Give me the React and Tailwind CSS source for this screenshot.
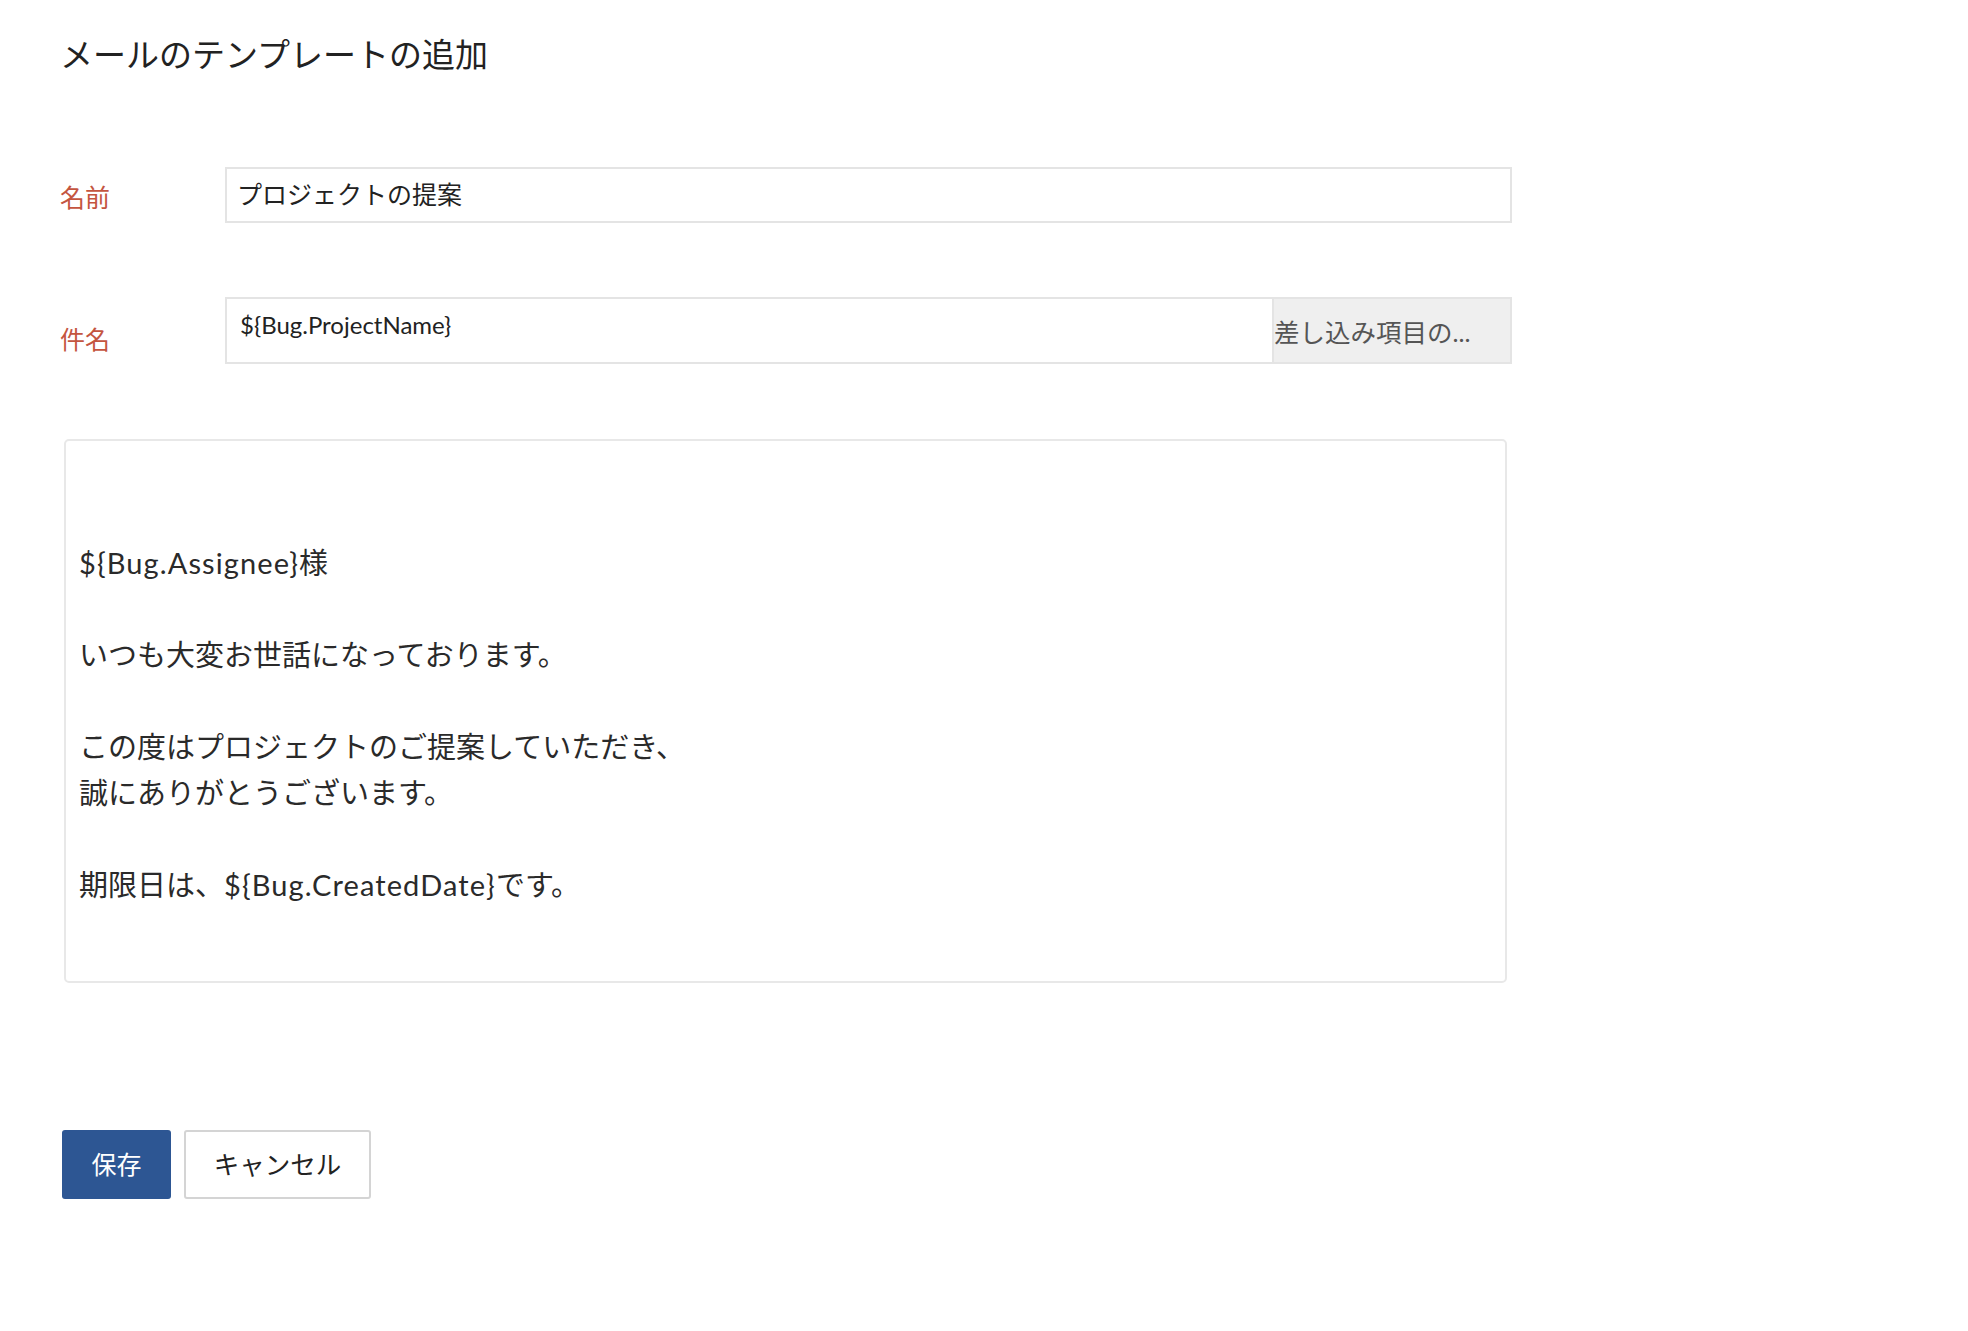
import React from "react";

const FONT = { fontFamily: "Lato, 'Noto Sans CJK JP', sans-serif" };

function L({ children }) {
  return <span className="tracking-[1.1px]">{children}</span>;
}

export default function App() {
  return (
    <div
      className="w-[1968px] h-[1331px] bg-white text-[#222] pl-[60px] pt-[30px]"
      style={FONT}
    >
      <h1 className="text-[33px] leading-[48px] font-normal text-[#222]">
        メールのテンプレートの追加
      </h1>

      <div className="mt-[89px] flex items-center">
        <div className="w-[165px] pt-[6px] text-[25px] text-[#c4553f]">名前</div>
        <div className="w-[1287px] h-[56px] border-2 border-[#e4e4e4] flex items-center pl-[10px] text-[25px] text-[#222]">
          プロジェクトの提案
        </div>
      </div>

      <div className="mt-[74px] flex items-center">
        <div className="w-[165px] pt-[18px] text-[25px] text-[#c4553f]">件名</div>
        <div className="w-[1287px] h-[67px] border-2 border-[#e4e4e4] flex">
          <div className="flex-1 pl-[13px] pt-[9px] text-[24px] leading-[34px] text-[#222]">
            {"${Bug.ProjectName}"}
          </div>
          <div className="w-[238px] bg-[#efefef] border-l-2 border-[#e4e4e4] flex items-center text-[25.5px] text-[#555] pt-[4px]">
            差し込み項目の...
          </div>
        </div>
      </div>

      <div className="mt-[75px] ml-[4px] w-[1443px] h-[544px] border-2 border-[#e8e8e8] rounded-[5px] pl-[13px] pt-[99px] text-[29px] leading-[46px] text-[#2a2a2a]">
        <div>
          <L>{"${Bug.Assignee}"}</L>様
        </div>
        <div className="h-[46px]" />
        <div>いつも大変お世話になっております。</div>
        <div className="h-[46px]" />
        <div>この度はプロジェクトのご提案していただき、</div>
        <div>誠にありがとうございます。</div>
        <div className="h-[46px]" />
        <div>
          期限日は、<L>{"${Bug.CreatedDate}"}</L>です。
        </div>
      </div>

      <div className="mt-[147px] ml-[2px] flex gap-[13px]">
        <button className="w-[109px] h-[69px] rounded-[3px] bg-[#2d5693] text-white text-[25px] flex items-center justify-center">
          保存
        </button>
        <button className="w-[187px] h-[69px] rounded-[3px] border-2 border-[#d4d4d4] bg-white text-[#222] text-[25.5px] flex items-center justify-center">
          キャンセル
        </button>
      </div>
    </div>
  );
}
